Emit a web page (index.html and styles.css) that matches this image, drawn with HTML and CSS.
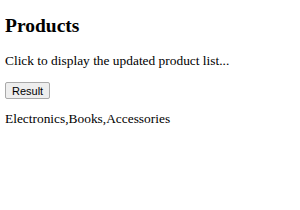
FILE: index.html
```html
<!DOCTYPE html>
<html lang="en">
<head>
    <meta charset="UTF-8">
    <title>Products</title>
    <link rel="stylesheet" href="styles.css">
</head>
<body>

    <h2 class="title">Products</h2>
    <p class="intro">Click to display the updated product list...</p>

    <button class="result-button" onclick="showProducts()">Result</button>

    <p class="product-list" id="product-list">Electronics,Books,Accessories</p>

    <script>
        // daftar produk yang ditampilkan
        const products = ['Electronics', 'Books', 'Accessories'];

        function showProducts() {
            document.getElementById('product-list').textContent = products.toString();
        }
    </script>

</body>
</html>
```

FILE: styles.css
```css
body {
    margin: 5px;
    font-family: 'Liberation Serif', 'Times New Roman', serif;
    font-size: 13.4px;
    color: #000;
    background-color: #fff;
}

.title {
    font-size: 19.5px;
    font-weight: bold;
    margin: 10px 0 16px;
}

.intro {
    margin: 0 0 13px;
}

.result-button {
    display: block;
    height: 17px;
    padding: 0 6px;
    font-family: 'Liberation Sans', Arial, sans-serif;
    font-size: 11px;
    background-color: #eeeeee;
    border: 1px solid #a9a9a9;
    border-radius: 2px;
    color: #000;
}

.product-list {
    margin: 12px 0;
}
```
